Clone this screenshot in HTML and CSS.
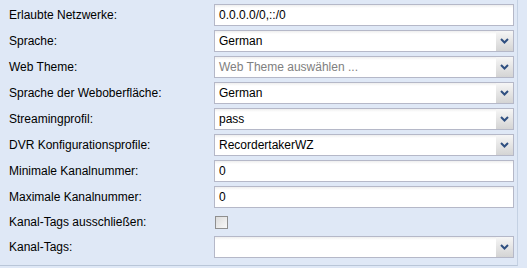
FILE: index.html
```html
<!DOCTYPE html>
<html lang="de">
<head>
<meta charset="UTF-8">
<title>Konfiguration</title>
<link rel="stylesheet" href="styles.css">
</head>
<body>
<div class="panel">
    <div class="form-row">
        <label class="form-label">Erlaubte Netzwerke:</label>
        <div class="field"><span class="field-text">0.0.0.0/0,::/0</span></div>
    </div>
    <div class="form-row">
        <label class="form-label">Sprache:</label>
        <div class="field combo"><span class="field-text">German</span><span class="trigger"><svg width="9" height="6" viewBox="0 0 9 6"><path d="M1 1 L4.5 4.5 L8 1" fill="none" stroke="#2f4f80" stroke-width="2"/></svg></span></div>
    </div>
    <div class="form-row">
        <label class="form-label">Web Theme:</label>
        <div class="field combo"><span class="field-text empty">Web Theme auswählen ...</span><span class="trigger"><svg width="9" height="6" viewBox="0 0 9 6"><path d="M1 1 L4.5 4.5 L8 1" fill="none" stroke="#2f4f80" stroke-width="2"/></svg></span></div>
    </div>
    <div class="form-row">
        <label class="form-label">Sprache der Weboberfläche:</label>
        <div class="field combo"><span class="field-text">German</span><span class="trigger"><svg width="9" height="6" viewBox="0 0 9 6"><path d="M1 1 L4.5 4.5 L8 1" fill="none" stroke="#2f4f80" stroke-width="2"/></svg></span></div>
    </div>
    <div class="form-row">
        <label class="form-label">Streamingprofil:</label>
        <div class="field combo"><span class="field-text">pass</span><span class="trigger"><svg width="9" height="6" viewBox="0 0 9 6"><path d="M1 1 L4.5 4.5 L8 1" fill="none" stroke="#2f4f80" stroke-width="2"/></svg></span></div>
    </div>
    <div class="form-row">
        <label class="form-label">DVR Konfigurationsprofile:</label>
        <div class="field combo"><span class="field-text">RecordertakerWZ</span><span class="trigger"><svg width="9" height="6" viewBox="0 0 9 6"><path d="M1 1 L4.5 4.5 L8 1" fill="none" stroke="#2f4f80" stroke-width="2"/></svg></span></div>
    </div>
    <div class="form-row">
        <label class="form-label">Minimale Kanalnummer:</label>
        <div class="field"><span class="field-text">0</span></div>
    </div>
    <div class="form-row">
        <label class="form-label">Maximale Kanalnummer:</label>
        <div class="field"><span class="field-text">0</span></div>
    </div>
    <div class="form-row check-row">
        <label class="form-label">Kanal-Tags ausschließen:</label>
        <span class="checkbox"></span>
    </div>
    <div class="form-row">
        <label class="form-label">Kanal-Tags:</label>
        <div class="field combo"><span class="field-text"></span><span class="trigger"><svg width="9" height="6" viewBox="0 0 9 6"><path d="M1 1 L4.5 4.5 L8 1" fill="none" stroke="#2f4f80" stroke-width="2"/></svg></span></div>
    </div>
</div>
</body>
</html>
```

FILE: styles.css
```css
body {
    margin: 0;
    padding: 0;
    background: #dfe8f6;
    font-family: "Liberation Sans", Arial, sans-serif;
    font-size: 12px;
    color: #000;
}
.panel {
    width: 518px;
    height: 266px;
    box-sizing: content-box;
    border-right: 1px solid #c4d1e3;
    border-bottom: 1px solid #b9c6d8;
    padding-top: 4px;
    box-sizing: border-box;
}
.form-row {
    display: flex;
    align-items: center;
    height: 22px;
    margin-bottom: 4px;
}
.form-label {
    width: 205px;
    padding-left: 9px;
    flex-shrink: 0;
}
.field {
    width: 300px;
    height: 22px;
    box-sizing: border-box;
    border: 1px solid #b5b8c8;
    background: linear-gradient(#eeeeee, #ffffff 3px);
    display: flex;
    align-items: center;
}
.field-text {
    flex: 1;
    padding-left: 4px;
    white-space: nowrap;
}
.field-text.empty {
    color: #808080;
}
.trigger {
    width: 17px;
    height: 20px;
    background: linear-gradient(#f6f6f6, #d4d4d4);
    display: flex;
    align-items: center;
    justify-content: center;
}
.check-row {
    height: 20px;
}
.checkbox {
    width: 13px;
    height: 13px;
    box-sizing: border-box;
    border: 1px solid #8f8f8f;
    background: linear-gradient(135deg, #dcdcdc, #f8f8f8);
    margin-left: 1px;
}
```
